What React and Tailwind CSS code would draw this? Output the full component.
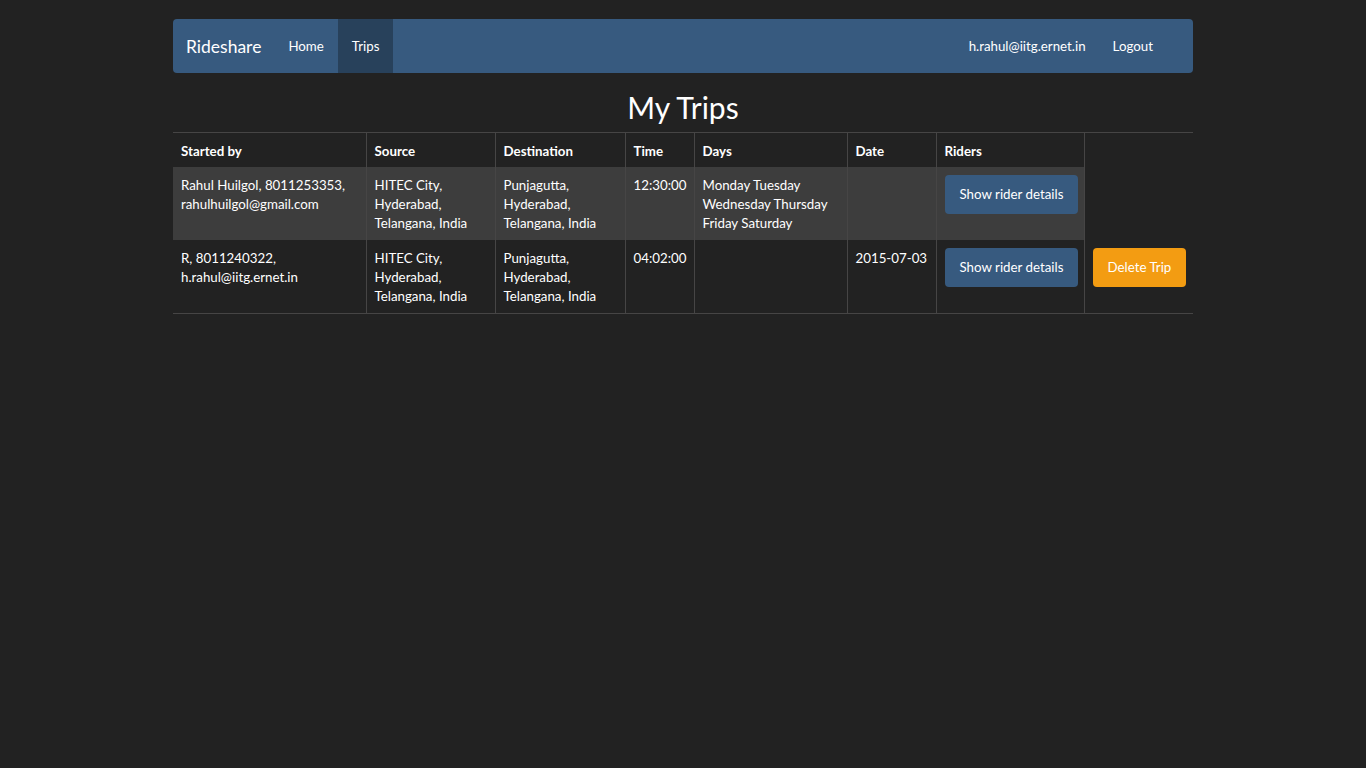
import React from "react";

const trips = [
    {
        by: ["Rahul Huilgol, 8011253353,", "rahulhuilgol@gmail.com"],
        source: ["HITEC City,", "Hyderabad,", "Telangana, India"],
        dest: ["Punjagutta,", "Hyderabad,", "Telangana, India"],
        time: "12:30:00",
        days: ["Monday Tuesday", "Wednesday Thursday", "Friday Saturday"],
        date: "",
        canDelete: false,
    },
    {
        by: ["R, 8011240322,", "h.rahul@iitg.ernet.in"],
        source: ["HITEC City,", "Hyderabad,", "Telangana, India"],
        dest: ["Punjagutta,", "Hyderabad,", "Telangana, India"],
        time: "04:02:00",
        days: [],
        date: "2015-07-03",
        canDelete: true,
    },
];

const Lines = ({ items }) => (
    <>
        {items.map((t, i) => (
            <div key={i}>{t}</div>
        ))}
    </>
);

const cell = "border-r border-[#464545] px-2 pt-[9px] pb-[7px] align-top text-left whitespace-nowrap";
const btnCell = "border-r border-[#464545] px-2 py-2 align-top text-left whitespace-nowrap";
const head = "border-r border-[#464545] px-2 pt-[9px] pb-[6px] align-top text-left font-bold";

const App = () => {
    return (
        <div
            className="min-h-screen bg-[#222222] text-white text-[13.3px] leading-[19px]"
            style={{ fontFamily: "Lato, 'Open Sans', sans-serif" }}
        >
            <div className="w-[1020px] mx-auto pt-[19px]">
                <nav className="h-[54px] bg-[#375a7f] rounded flex items-stretch justify-between">
                    <div className="flex items-stretch">
                        <a className="flex items-center pl-[13px] pr-[13px] text-[17.5px] text-white">Rideshare</a>
                        <a className="flex items-center px-[14px] text-white">Home</a>
                        <a className="flex items-center px-[14px] text-white bg-[#28415b]">Trips</a>
                    </div>
                    <div className="flex items-stretch pr-[26px]">
                        <a className="flex items-center px-[13px] text-white">h.rahul@iitg.ernet.in</a>
                        <a className="flex items-center px-[14px] text-white">Logout</a>
                    </div>
                </nav>

                <h2 className="mt-[18px] mb-[8px] h-[33px] leading-[33px] text-[30px] text-center font-normal">My Trips</h2>

                <table className="w-full table-fixed border-collapse border-t border-b border-[#464545]">
                    <colgroup>
                        <col className="w-[193px]" />
                        <col className="w-[129px]" />
                        <col className="w-[130px]" />
                        <col className="w-[69px]" />
                        <col className="w-[153px]" />
                        <col className="w-[89px]" />
                        <col className="w-[148px]" />
                        <col className="w-[109px]" />
                    </colgroup>
                    <thead>
                        <tr>
                            <th className={head}>Started by</th>
                            <th className={head}>Source</th>
                            <th className={head}>Destination</th>
                            <th className={head}>Time</th>
                            <th className={head}>Days</th>
                            <th className={head}>Date</th>
                            <th className={head}>Riders</th>
                        </tr>
                    </thead>
                    <tbody>
                        {trips.map((trip, i) => (
                            <tr key={i} className={i % 2 === 0 ? "bg-[#3d3d3d]" : ""}>
                                <td className={cell}><Lines items={trip.by} /></td>
                                <td className={cell}><Lines items={trip.source} /></td>
                                <td className={cell}><Lines items={trip.dest} /></td>
                                <td className={cell}>{trip.time}</td>
                                <td className={cell}><Lines items={trip.days} /></td>
                                <td className={cell}>{trip.date}</td>
                                <td className={btnCell}>
                                    <button className="bg-[#375a7f] text-white rounded px-[15px] py-[10px] leading-[19px] whitespace-nowrap">
                                        Show rider details
                                    </button>
                                </td>
                                {trip.canDelete && (
                                    <td className="px-2 py-2 align-top">
                                        <button className="bg-[#f39c12] text-white rounded px-[15px] py-[10px] leading-[19px] whitespace-nowrap">
                                            Delete Trip
                                        </button>
                                    </td>
                                )}
                            </tr>
                        ))}
                    </tbody>
                </table>
            </div>
        </div>
    );
};

export default App;
